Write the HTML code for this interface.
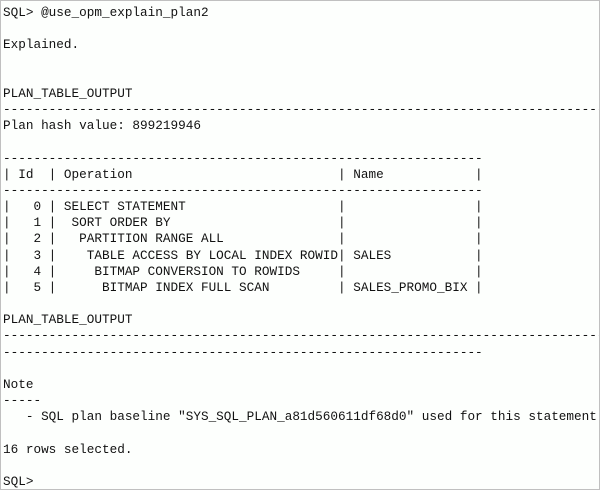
<!DOCTYPE html>
<html><head><meta charset="utf-8"><style>
html,body{margin:0;padding:0;background:#fff;}
.box{position:absolute;left:0;top:0;width:598px;height:488px;border:1px solid #c0c0c0;background:#fdfffd;overflow:hidden;}
pre{margin:0;position:absolute;left:2px;top:4px;font-family:"Liberation Mono",monospace;font-size:12.7px;line-height:16.17px;color:#111;white-space:pre;}
</style></head><body><div class="box"><pre>SQL&gt; @use_opm_explain_plan2

Explained.


PLAN_TABLE_OUTPUT
--------------------------------------------------------------------------------------------
Plan hash value: 899219946

---------------------------------------------------------------
| Id  | Operation                           | Name            |
---------------------------------------------------------------
|   0 | SELECT STATEMENT                    |                 |
|   1 |  SORT ORDER BY                      |                 |
|   2 |   PARTITION RANGE ALL               |                 |
|   3 |    TABLE ACCESS BY LOCAL INDEX ROWID| SALES           |
|   4 |     BITMAP CONVERSION TO ROWIDS     |                 |
|   5 |      BITMAP INDEX FULL SCAN         | SALES_PROMO_BIX |

PLAN_TABLE_OUTPUT
--------------------------------------------------------------------------------------------
---------------------------------------------------------------

Note
-----
   - SQL plan baseline "SYS_SQL_PLAN_a81d560611df68d0" used for this statement

16 rows selected.

SQL&gt;</pre></div></body></html>
